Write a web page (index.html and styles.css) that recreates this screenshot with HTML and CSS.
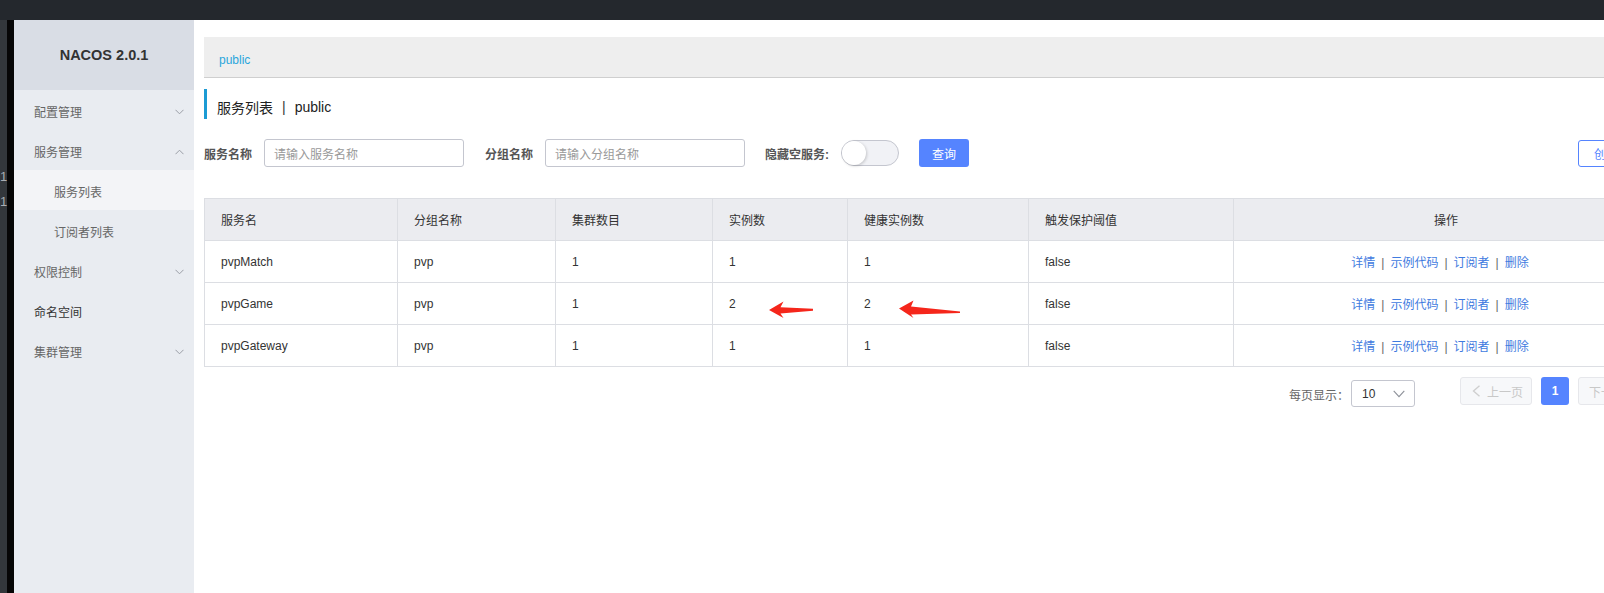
FILE: index.html
```html
<!DOCTYPE html>
<html lang="zh-CN">
<head>
<meta charset="utf-8">
<title>NACOS</title>
<link rel="stylesheet" href="styles.css">
</head>
<body>
<div class="topbar"></div>
<div class="frame">
  <div class="edge"><span>1</span><span>1</span></div>
  <aside class="sidebar">
    <div class="brand">NACOS 2.0.1</div>
    <div class="menu-item"><span>配置管理</span><svg class="chev" width="9" height="6" viewBox="0 0 9 6"><path d="M0.5 0.8 L4.5 4.8 L8.5 0.8" /></svg></div>
    <div class="menu-item"><span>服务管理</span><svg class="chev" width="9" height="6" viewBox="0 0 9 6"><path d="M0.5 5.2 L4.5 1.2 L8.5 5.2" /></svg></div>
    <div class="menu-item sub active"><span>服务列表</span></div>
    <div class="menu-item sub"><span>订阅者列表</span></div>
    <div class="menu-item"><span>权限控制</span><svg class="chev" width="9" height="6" viewBox="0 0 9 6"><path d="M0.5 0.8 L4.5 4.8 L8.5 0.8" /></svg></div>
    <div class="menu-item leaf"><span>命名空间</span></div>
    <div class="menu-item"><span>集群管理</span><svg class="chev" width="9" height="6" viewBox="0 0 9 6"><path d="M0.5 0.8 L4.5 4.8 L8.5 0.8" /></svg></div>
  </aside>
  <main class="main">
    <div class="content">
      <div class="crumb">public</div>
      <div class="title"><span>服务列表</span><span class="sep">|</span><span>public</span></div>
      <div class="search">
        <span class="label">服务名称</span>
        <div class="input"><span class="ph">请输入服务名称</span></div>
        <span class="label l2">分组名称</span>
        <div class="input"><span class="ph">请输入分组名称</span></div>
        <span class="label l3">隐藏空服务:</span>
        <div class="switch"><span class="knob"></span></div>
        <div class="btn primary">查询</div>
        <div class="btn outline">创建服务</div>
      </div>
      <table class="grid">
        <colgroup>
          <col style="width:193px"><col style="width:158px"><col style="width:157px"><col style="width:135px"><col style="width:181px"><col style="width:205px"><col style="width:425px">
        </colgroup>
        <thead>
          <tr><th>服务名</th><th>分组名称</th><th>集群数目</th><th>实例数</th><th>健康实例数</th><th>触发保护阈值</th><th class="ops">操作</th></tr>
        </thead>
        <tbody>
          <tr><td>pvpMatch</td><td>pvp</td><td>1</td><td>1</td><td>1</td><td>false</td><td class="ops"><a>详情</a><span class="bar">|</span><a>示例代码</a><span class="bar">|</span><a>订阅者</a><span class="bar">|</span><a>删除</a></td></tr>
          <tr><td>pvpGame</td><td>pvp</td><td>1</td><td>2</td><td>2</td><td>false</td><td class="ops"><a>详情</a><span class="bar">|</span><a>示例代码</a><span class="bar">|</span><a>订阅者</a><span class="bar">|</span><a>删除</a></td></tr>
          <tr><td>pvpGateway</td><td>pvp</td><td>1</td><td>1</td><td>1</td><td>false</td><td class="ops"><a>详情</a><span class="bar">|</span><a>示例代码</a><span class="bar">|</span><a>订阅者</a><span class="bar">|</span><a>删除</a></td></tr>
        </tbody>
      </table>
      <div class="pager">
        <span class="pl">每页显示：</span>
        <div class="select"><span>10</span><svg width="12" height="8" viewBox="0 0 12 8"><path d="M0.7 0.8 L6 6.6 L11.3 0.8" /></svg></div>
        <div class="pbtn prev"><svg width="9" height="12" viewBox="0 0 9 12"><path d="M7.5 0.8 L1.5 6 L7.5 11.2" /></svg><span>上一页</span></div>
        <div class="pnum">1</div>
        <div class="pbtn next"><span>下一页</span><svg width="9" height="12" viewBox="0 0 9 12"><path d="M1.5 0.8 L7.5 6 L1.5 11.2" /></svg></div>
      </div>
      <svg class="marks" width="1454" height="573" viewBox="194 20 1454 573">
        <polygon points="769,310 783.5,301.5 780.5,307.2 813,308.7 813,310.7 780.5,313.4 783.5,318" />
        <polygon points="899,308.6 913.5,300.6 911,306.4 960,311.6 960,313 911,314.6 913.5,318" />
      </svg>
    </div>
  </main>
</div>
</body>
</html>
```
FILE: styles.css
```css
* { box-sizing: border-box; }
html, body { margin: 0; padding: 0; }
body {
  width: 1604px;
  height: 593px;
  overflow: hidden;
  background: #24282d;
  font-family: "Liberation Sans", "Noto Sans CJK SC", sans-serif;
  font-size: 12px;
  color: #333;
}
.topbar { height: 20px; background: #24282d; }
.frame { display: flex; height: 573px; }
.edge {
  width: 14px;
  flex: none;
  background: linear-gradient(to right, #33373b 0, #33373b 7px, #060606 7px, #060606 14px);
  padding-top: 144px;
  display: flex;
  flex-direction: column;
  color: #a8adb3;
  font-size: 13px;
  line-height: 25px;
  overflow: hidden;
}

.sidebar { width: 180px; flex: none; background: #e9ecf1; }
.brand {
  height: 70px;
  background: #d9dde5;
  display: flex;
  align-items: center;
  justify-content: center;
  font-family: "Liberation Sans", sans-serif;
  font-weight: bold;
  font-size: 14.5px;
  color: #333;
}
.menu-item {
  height: 40px;
  display: flex;
  align-items: center;
  justify-content: space-between;
  padding: 3px 10px 0 20px;
  font-size: 12px;
  color: #666;
}
.menu-item.sub { padding-left: 40px; }
.menu-item.active { background: #f3f4f7; }
.menu-item.leaf { color: #333; }
.chev path { fill: none; stroke: #9a9ea6; stroke-width: 1; }

.main { flex: 1; min-width: 0; background: #fff; overflow: hidden; }
.content { position: relative; width: 1464px; padding: 17px 0 0 10px; }

.crumb {
  height: 41px;
  border-bottom: 1px solid #cfcfcf;
  background: #eeeeee;
  padding-left: 15px;
  padding-top: 5px;
  display: flex;
  align-items: center;
  color: #2aa6dc;
  font-size: 12px;
}
.title {
  margin-top: 11px;
  height: 30px;
  border-left: 3px solid #1c9bd4;
  padding: 6px 0 0 10px;
  display: flex;
  align-items: center;
  font-size: 14px;
  color: #222;
}
.title .sep { margin: 0 9px 0 9px; color: #333; }

.search { margin-top: 20px; display: flex; align-items: center; height: 28px; }
.label { font-weight: bold; color: #555; margin-right: 12px; }
.label.l2 { margin-left: 21px; }
.label.l3 { margin-left: 20px; }
.input {
  width: 200px;
  height: 28px;
  border: 1px solid #c4c6cf;
  border-radius: 3px;
  padding: 0 9px;
  display: flex;
  align-items: center;
}
.ph { color: #999; }
.switch {
  width: 58px;
  height: 26px;
  border: 1px solid #c4c6cf;
  border-radius: 13px;
  background: #f1f2f6;
  display: flex;
  align-items: center;
}
.knob {
  width: 24px;
  height: 24px;
  border-radius: 50%;
  background: #fff;
  box-shadow: 1px 1px 3px rgba(0,0,0,0.18);
}
.btn {
  height: 28px;
  border-radius: 3px;
  display: flex;
  align-items: center;
  justify-content: center;
  font-size: 12px;
}
.btn.primary { width: 50px; margin-left: 20px; background: #5584ff; color: #fff; }
.btn.outline { width: 80px; margin-left: auto; height: 27px; border: 1px solid #5584ff; color: #5584ff; background: #fff; }

.grid {
  margin-top: 31px;
  width: 1454px;
  table-layout: fixed;
  border-collapse: collapse;
  border: 1px solid #dcdee3;
}
.grid th, .grid td {
  height: 42px;
  padding: 0 16px;
  border: 1px solid #dcdee3;
  text-align: left;
  font-weight: normal;
  font-size: 12px;
  color: #333;
  white-space: nowrap;
}
.grid th { background: #ebecf0; }
.grid .ops { text-align: center; }
.grid td.ops { padding-right: 28px; }
.grid .ops a { color: #3f7be0; }
.grid .ops .bar { color: #666; margin: 0 6px 0 6px; }

.pager {
  margin-top: 10px;
  width: 1454px;
  display: flex;
  justify-content: flex-end;
  align-items: flex-start;
  padding-right: 8px;
}
.pl { color: #666; margin-top: 9px; }
.select {
  width: 64px;
  height: 27px;
  margin-top: 3px;
  margin-left: 2px;
  border: 1px solid #c4c6cf;
  border-radius: 3px;
  padding: 0 9px 0 10px;
  display: flex;
  align-items: center;
  justify-content: space-between;
  color: #333;
}
.select path { fill: none; stroke: #8d9199; stroke-width: 1.1; }
.pbtn {
  width: 72px;
  height: 28px;
  border: 1px solid #e6e7eb;
  background: #f7f8fa;
  border-radius: 3px;
  display: flex;
  align-items: center;
  color: #c8c8c8;
}
.pbtn path { fill: none; stroke: #cfcfcf; stroke-width: 1.4; }
.prev { margin-left: 45px; padding-left: 11px; }
.prev span { margin-left: 6px; }
.next { margin-left: 9px; padding-left: 10px; }
.next span { margin-right: 6px; }
.pnum {
  width: 28px;
  height: 28px;
  margin-left: 9px;
  border-radius: 3px;
  background: #5584ff;
  color: #fff;
  font-weight: bold;
  display: flex;
  align-items: center;
  justify-content: center;
}

.marks { position: absolute; left: 0; top: 0; pointer-events: none; }
.marks polygon { fill: #f5261b; }
```
